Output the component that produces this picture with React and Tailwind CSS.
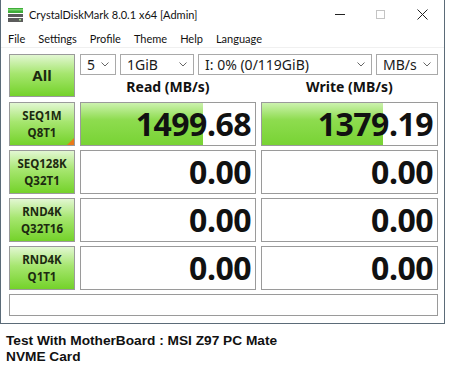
import React from 'react';

const ui = { fontFamily: '"Noto Sans", "Open Sans", sans-serif' };
const chrome = { fontFamily: 'Lato, "Noto Sans", sans-serif' };
const arial = { fontFamily: '"Liberation Sans", Arial, sans-serif' };

function DriveIcon() {
  return (
    <svg width="15" height="14" viewBox="0 0 15 14">
      <rect x="0" y="0" width="15" height="5" fill="#3fae3a" />
      <rect x="0" y="1" width="15" height="1.5" fill="#7ad36e" />
      <rect x="0" y="6" width="15" height="3" fill="#5c5c5c" />
      <rect x="0" y="10" width="15" height="4" fill="#5c5c5c" />
      <rect x="11" y="11" width="2" height="1.5" fill="#9fe38a" />
    </svg>
  );
}

function Chevron() {
  return (
    <svg width="8" height="5" viewBox="0 0 8 5" className="shrink-0">
      <path d="M0.5 0.5 L4 4 L7.5 0.5" fill="none" stroke="#666" strokeWidth="1" />
    </svg>
  );
}

function Combo({ value, className }) {
  return (
    <div className={`h-[21px] flex items-center justify-between border border-[#a9a9a9] bg-white pl-[6px] pr-[6px] text-[14px] text-[#1a1a1a] ${className}`}>
      <span className="leading-none">{value}</span>
      <Chevron />
    </div>
  );
}

function LabelButton({ top, bottom, mark }) {
  return (
    <div className="relative h-[44px] flex flex-col items-center justify-center border border-[#9a9a9a] bg-[linear-gradient(to_bottom,#e2f7d2_0%,#a6e66f_45%,#74d22a_100%)] text-[11.5px] font-bold leading-[17px] text-[#1c2a10]">
      <span>{top}</span>
      <span>{bottom}</span>
      {mark && (
        <div className="absolute bottom-0 right-0 w-0 h-0 border-l-[7px] border-l-transparent border-b-[7px] border-b-[#e8791a]" />
      )}
    </div>
  );
}

function Cell({ value, fill }) {
  return (
    <div className="relative h-[44px] border border-[#9a9a9a] bg-white overflow-hidden flex items-center justify-end pr-[4px]">
      {fill && (
        <div
          className="absolute left-0 top-0 bottom-0 bg-[linear-gradient(to_bottom,#ccf2ae_0%,#8edc4f_40%,#78d334_100%)]"
          style={{ width: fill }}
        />
      )}
      <span className="relative text-[32px] font-bold leading-none text-[#111] tracking-[-0.5px]">{value}</span>
    </div>
  );
}

export default function App() {
  const rows = [
    { top: 'SEQ1M', bottom: 'Q8T1', read: '1499.68', write: '1379.19', rf: '122px', wf: '121px', mark: true },
    { top: 'SEQ128K', bottom: 'Q32T1', read: '0.00', write: '0.00' },
    { top: 'RND4K', bottom: 'Q32T16', read: '0.00', write: '0.00' },
    { top: 'RND4K', bottom: 'Q1T1', read: '0.00', write: '0.00' },
  ];

  return (
    <div className="w-[450px] h-[374px] bg-white" style={ui}>
      <div className="w-[445px] h-[324px] border-l border-r border-b border-[#5b6b78] bg-white flex flex-col">
        {/* title bar */}
        <div className="h-[29px] flex items-center" style={chrome}>
          <div className="pl-[7px] pr-[6px] flex items-center"><DriveIcon /></div>
          <span className="text-[11px] text-[#111] leading-none">CrystalDiskMark 8.0.1 x64 [Admin]</span>
          <div className="ml-auto flex items-center h-full">
            <div className="w-[40px] flex justify-center"><div className="w-[10px] h-[1px] bg-[#222]" /></div>
            <div className="w-[40px] flex justify-center"><div className="w-[9px] h-[9px] border border-[#c4c4c4]" /></div>
            <div className="w-[44px] flex justify-center">
              <svg width="11" height="11" viewBox="0 0 11 11"><path d="M0.5 0.5 L10.5 10.5 M10.5 0.5 L0.5 10.5" stroke="#222" strokeWidth="1" /></svg>
            </div>
          </div>
        </div>

        {/* menu */}
        <div className="h-[19px] flex items-center gap-[13px] pl-[7px] text-[11px] text-[#111] leading-none border-b border-[#f0f0f0]" style={chrome}>
          <span>File</span>
          <span>Settings</span>
          <span>Profile</span>
          <span>Theme</span>
          <span>Help</span>
          <span>Language</span>
        </div>

        {/* main */}
        <div className="pl-[8px] pt-[6px] flex flex-col gap-[4px]">
          <div className="flex gap-[5px] mb-[1px]">
            <div className="w-[66px] h-[43px] border border-[#9a9a9a] bg-[linear-gradient(to_bottom,#e2f7d2_0%,#a6e66f_45%,#74d22a_100%)] flex items-center justify-center text-[15px] font-bold text-[#1c2a10]">
              All
            </div>
            <div className="flex flex-col">
              <div className="flex gap-[4px]">
                <Combo value="5" className="w-[36px]" />
                <Combo value="1GiB" className="w-[74px]" />
                <Combo value="I: 0% (0/119GiB)" className="w-[174px]" />
                <Combo value="MB/s" className="w-[62px]" />
              </div>
              <div className="flex gap-[5px] h-[22px] items-center">
                <div className="w-[176px] text-center text-[14px] font-bold text-[#111]">Read (MB/s)</div>
                <div className="w-[177px] text-center text-[14px] font-bold text-[#111]">Write (MB/s)</div>
              </div>
            </div>
          </div>

          {rows.map((r, i) => (
            <div key={i} className="grid grid-cols-[66px_176px_177px] gap-[5px]">
              <LabelButton top={r.top} bottom={r.bottom} mark={r.mark} />
              <Cell value={r.read} fill={r.rf} />
              <Cell value={r.write} fill={r.wf} />
            </div>
          ))}

          <div className="w-[429px] h-[22px] border border-[#9a9a9a] bg-white" />
        </div>
      </div>

      <div className="pl-[6px] pt-[9px] text-[13.7px] font-bold text-[#111] leading-[16px]" style={arial}>
        <div>Test With MotherBoard : MSI Z97 PC Mate</div>
        <div>NVME Card</div>
      </div>
    </div>
  );
}
